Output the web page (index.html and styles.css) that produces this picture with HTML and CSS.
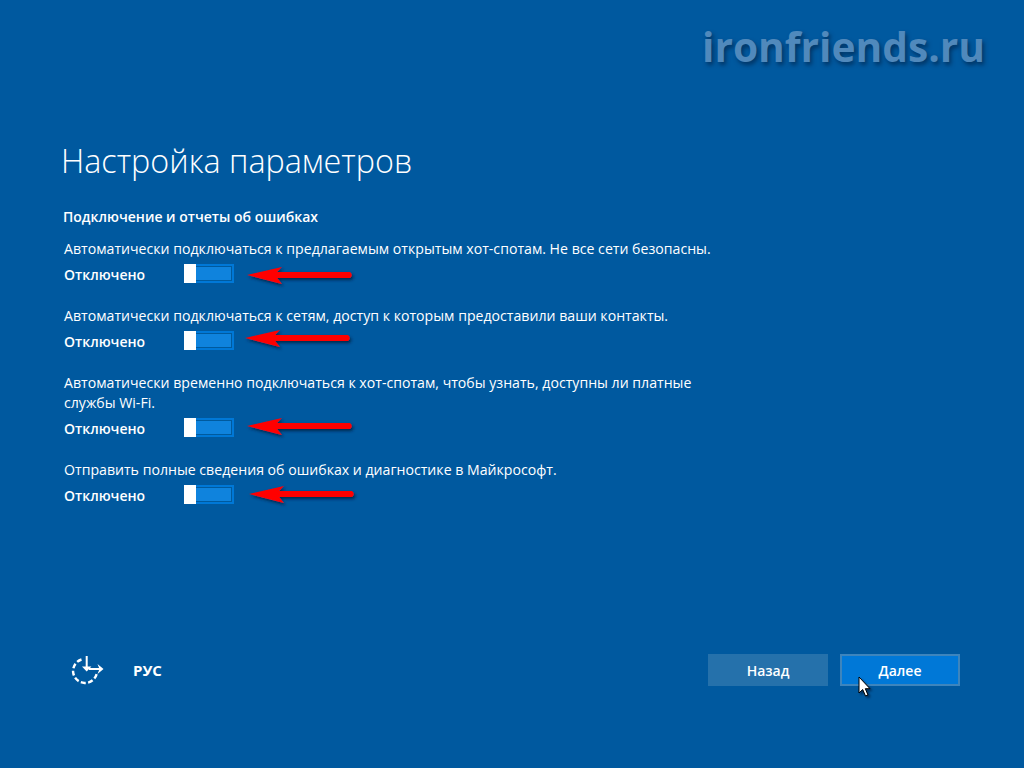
FILE: index.html
```html
<!DOCTYPE html>
<html lang="ru">
<head>
<meta charset="utf-8">
<title>Настройка параметров</title>
<link rel="stylesheet" href="styles.css">
</head>
<body>
<div class="watermark">ironfriends.ru</div>
<main class="content">
  <h1 class="title">Настройка параметров</h1>
  <h2 class="section">Подключение и отчеты об ошибках</h2>
  <section class="option">
    <p class="desc">Автоматически подключаться к предлагаемым открытым хот-спотам. Не все сети безопасны.</p>
    <div class="row"><span class="state">Отключено</span><span class="toggle"><span class="thumb"></span><span class="track"></span></span>
      <svg class="arrow a1" viewBox="0 0 110 24"><use href="#red-arrow"/></svg></div>
  </section>
  <section class="option">
    <p class="desc">Автоматически подключаться к сетям, доступ к которым предоставили ваши контакты.</p>
    <div class="row"><span class="state">Отключено</span><span class="toggle"><span class="thumb"></span><span class="track"></span></span>
      <svg class="arrow a2" viewBox="0 0 110 24"><use href="#red-arrow"/></svg></div>
  </section>
  <section class="option">
    <p class="desc">Автоматически временно подключаться к хот-спотам, чтобы узнать, доступны ли платные службы Wi-Fi.</p>
    <div class="row"><span class="state">Отключено</span><span class="toggle"><span class="thumb"></span><span class="track"></span></span>
      <svg class="arrow a3" viewBox="0 0 110 24"><use href="#red-arrow"/></svg></div>
  </section>
  <section class="option">
    <p class="desc">Отправить полные сведения об ошибках и диагностике в Майкрософт.</p>
    <div class="row"><span class="state">Отключено</span><span class="toggle"><span class="thumb"></span><span class="track"></span></span>
      <svg class="arrow a4" viewBox="0 0 110 24"><use href="#red-arrow"/></svg></div>
  </section>
</main>
<footer class="footer">
  <svg class="access" viewBox="0 0 34 30" fill="none" stroke="#fff" stroke-width="2.400">
    <path d="M11.500 4.500A12 12 0 1 0 26.800 18.500" stroke-dasharray="5 2.400"/>
    <path d="M16.700 1V14" stroke-width="2"/>
    <path d="M12 11.500H21.400L16.700 16.500Z" fill="#fff" stroke="none"/>
    <path d="M19 14H31" stroke-width="2"/>
    <path d="M27.500 9L33.500 14L27.500 19L29.500 14Z" fill="#fff" stroke="none"/>
  </svg>
  <span class="lang">РУС</span>
  <button class="btn back">Назад</button>
  <button class="btn next">Далее</button>
</footer>
<svg class="cursor" viewBox="0 0 14 22"><path d="M1 1V17L4.700 13.500L7.500 20L10 19L7.300 12.700H12Z" fill="#fff" stroke="#000" stroke-width="1"/></svg>
<svg class="defs" width="0" height="0">
  <defs>
    <filter id="sh" x="-10%" y="-30%" width="125%" height="170%"><feDropShadow dx="1.500" dy="2" stdDeviation="1.500" flood-color="#001a40" flood-opacity=".85"/></filter>
    <path id="red-arrow" filter="url(#sh)" fill="#f00" d="M1 11L36 3L31 8L104 8Q107.500 11 104 14L31 14L36 20Z"/>
  </defs>
</svg>
</body>
</html>
```
FILE: styles.css
```css
* { box-sizing: border-box; }
html, body { margin: 0; height: 100%; }
body {
  position: relative;
  width: 1024px;
  height: 768px;
  overflow: hidden;
  background: #00599f;
  color: #fff;
  font-family: "Open Sans", "Noto Sans", sans-serif;
  display: flex;
  flex-direction: column;
  padding: 140px 64px 0 64px;
}
.content { flex: 1; }
.title {
  margin: 0 0 0 -3px;
  font-size: 32.300px;
  font-weight: 300;
  line-height: 40px;
}
.section {
  margin: 27px 0 12px -1px;
  font-size: 14px;
  font-weight: 600;
  line-height: 20px;
}
.option { margin-bottom: 22px; }
.desc {
  margin: 0;
  width: 660px;
  font-size: 14.130px;
  line-height: 20px;
}
.row { position: relative; display: flex; align-items: center; height: 20px; margin-top: 5px; }
.state { width: 120px; font-size: 14px; font-weight: 600; }
.toggle { display: flex; width: 50px; height: 19px; margin-top: -2px; }
.thumb { width: 12px; background: #fff; }
.track {
  flex: 1;
  background: #0f83dd;
  border: 2px solid #0078d7;
  border-left: 0;
  box-shadow: inset 0 1px #005a9e, inset 0 -1px #005a9e, inset -1px 0 #005a9e;
}
.arrow { position: absolute; width: 110px; height: 24px; overflow: visible; }
.a1 { left: 182px; top: 0; }
.a2 { left: 180px; top: -4px; }
.a3 { left: 182px; top: -3px; }
.a4 { left: 184px; top: -2px; }
.footer { display: flex; align-items: center; height: 32px; margin: 0 0 82px 6px; }
.access { width: 34px; height: 30px; margin-right: 29px; }
.lang { font-size: 15px; font-weight: 700; flex: 1; }
.btn {
  width: 120px;
  height: 32px;
  border: 2px solid transparent;
  color: #fff;
  font: 600 14px "Open Sans", "Noto Sans", sans-serif;
  padding: 0;
}
.back { background: #2571ab; border-color: #2571ab; margin-right: 12px; }
.next { background: #0078d7; border-color: #3d85bd; }
.watermark {
  position: absolute;
  left: 702px;
  top: 18px;
  font: 700 40.700px "Open Sans", "Noto Sans", sans-serif;
  line-height: 56px;
  color: #5089bc;
  text-shadow: 2px 3px 4px #003464;
}
.cursor { position: absolute; left: 858px; top: 676px; width: 14px; height: 22px; filter: drop-shadow(2px 2px 1px rgba(0,20,50,.6)); }
.defs { position: absolute; }
```
